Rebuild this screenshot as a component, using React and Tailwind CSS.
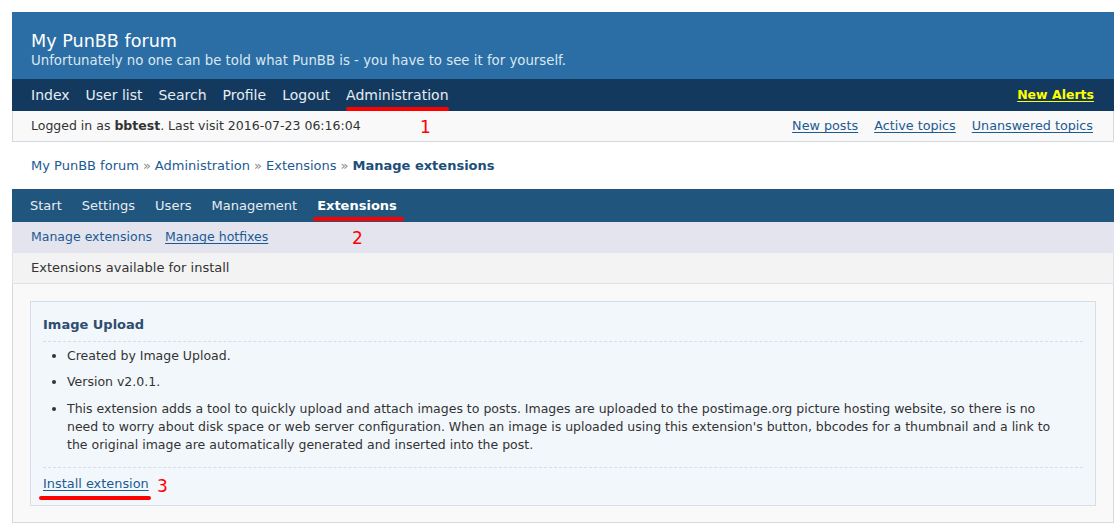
import React from "react";

const font = { fontFamily: '"DejaVu Sans", Verdana, sans-serif' };

const RedMark = ({ className }) => (
  <span className={`absolute h-[4px] rounded-full bg-[#ff0000] ${className}`} />
);

const mainNav = ["Index", "User list", "Search", "Profile", "Logout", "Administration"];
const adminNav = ["Start", "Settings", "Users", "Management", "Extensions"];

export default function App() {
  return (
    <div className="min-h-[528px] bg-white pt-3 pl-3 pr-[6px]" style={font}>
      {/* Header */}
      <div className="bg-[#2a6ea5] px-[19px] pt-[19px] pb-[9px] text-white">
        <h1 className="text-[17.6px] leading-[20px]">My PunBB forum</h1>
        <p className="pt-[1px] text-[13.3px] leading-[18px] text-[#dbe7f1]">
          Unfortunately no one can be told what PunBB is - you have to see it for yourself.
        </p>
      </div>

      {/* Main nav */}
      <div className="flex h-[32px] items-center justify-between bg-[#133a5e] pl-[19px] pr-[20px]">
        <ul className="flex gap-[16px] text-[14px] text-[#e6edf3]">
          {mainNav.map((item) => (
            <li key={item} className="relative">
              {item}
              {item === "Administration" && <RedMark className="left-0 right-0 top-[22px]" />}
            </li>
          ))}
        </ul>
        <a className="text-[12.5px] font-bold text-[#ffff00] underline underline-offset-2">New Alerts</a>
      </div>

      {/* Status bar */}
      <div className="relative flex h-[31px] items-center justify-between border-b border-r border-l border-[#d3d9e1] bg-[#f9f9f9] pl-[18px] pr-[20px] text-[12.5px] text-[#333]">
        <p>
          Logged in as <strong>bbtest</strong>. Last visit 2016-07-23 06:16:04
        </p>
        <span className="absolute left-[407px] top-[6px] text-[17px] leading-[20px] text-[#ff0000]">1</span>
        <div className="flex gap-[16px] text-[12.75px] text-[#1c5a92]">
          <a className="underline underline-offset-2">New posts</a>
          <a className="underline underline-offset-2">Active topics</a>
          <a className="underline underline-offset-2">Unanswered topics</a>
        </div>
      </div>

      {/* Breadcrumb */}
      <div className="flex h-[47px] items-center pl-[19px] text-[13px] text-[#1c5a92]">
        <span>My PunBB forum</span>
        <span className="mx-[4px] text-[#888]">»</span>
        <span>Administration</span>
        <span className="mx-[4px] text-[#888]">»</span>
        <span>Extensions</span>
        <span className="mx-[4px] text-[#888]">»</span>
        <strong className="text-[#1d4e78]">Manage extensions</strong>
      </div>

      {/* Admin nav */}
      <div className="flex h-[33px] items-center bg-[#20557d] pl-[18px] text-[13px] text-[#e6edf3]">
        <ul className="flex gap-[20px]">
          {adminNav.map((item) => (
            <li key={item} className={`relative ${item === "Extensions" ? "font-bold text-white" : ""}`}>
              {item}
              {item === "Extensions" && <RedMark className="-left-[4px] -right-[7px] top-[21px]" />}
            </li>
          ))}
        </ul>
      </div>

      {/* Sub nav */}
      <div className="relative flex h-[31px] items-center gap-[13px] bg-[#e3e4ee] pl-[19px] text-[12.5px] text-[#1c5a92]">
        <a>Manage extensions</a>
        <a className="underline underline-offset-2">Manage hotfixes</a>
        <span className="absolute left-[340px] top-[6px] text-[17px] leading-[20px] text-[#ff0000]">2</span>
      </div>

      {/* Section header */}
      <div className="flex h-[31px] items-center border-b border-r border-l border-[#dfe2ea] bg-[#f3f3f3] pl-[18px] text-[13px] text-[#333]">
        Extensions available for install
      </div>

      {/* Content */}
      <div className="border-b border-r border-l border-[#d3d9e1] bg-[#f9f9f9] px-[17px] pt-[17px] pb-[16px]">
        <div className="border border-[#d8dee6] bg-[#f2f7fb] px-[12px] pt-[13px] pb-[12px]">
          <h3 className="border-b border-dashed border-[#d6dde5] pb-[6px] text-[13px] font-bold text-[#2e4d70]">
            Image Upload
          </h3>
          <ul className="border-b border-dashed border-[#d6dde5] pt-[5px] pb-[13px] pl-[24px] pr-[30px] text-[12.5px] leading-[18px] text-[#333]">
            <li className="mb-[8px] list-disc">Created by Image Upload.</li>
            <li className="mb-[9px] list-disc">Version v2.0.1.</li>
            <li className="list-disc">
              This extension adds a tool to quickly upload and attach images to posts. Images are uploaded to the
              postimage.org picture hosting website, so there is no need to worry about disk space or web server
              configuration. When an image is uploaded using this extension's button, bbcodes for a thumbnail and a
              link to the original image are automatically generated and inserted into the post.
            </li>
          </ul>
          <div className="relative pt-[7px] text-[12.9px] leading-[18px]">
            <a className="relative text-[#1c5a92] underline underline-offset-2">
              Install extension
              <RedMark className="-left-[4px] -right-[2px] top-[20px]" />
            </a>
            <span className="absolute left-[114px] top-[8px] text-[17px] leading-[20px] text-[#ff0000]">3</span>
          </div>
        </div>
      </div>
    </div>
  );
}
